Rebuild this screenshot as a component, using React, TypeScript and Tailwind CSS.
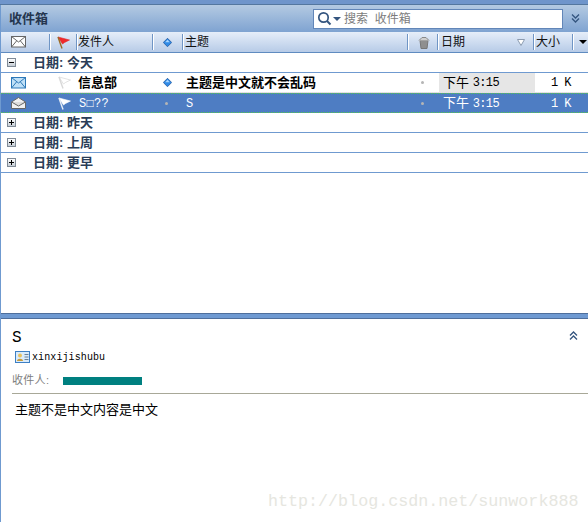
import React from 'react';

const cjk = '"Liberation Sans", "Noto Sans CJK SC", sans-serif';
const mono = '"Liberation Mono", monospace';

function Sep() {
  return <div className="w-[2px] h-[16px] shrink-0 border-l border-[#6f95c5] border-r border-r-white" />;
}

function Latin({ children }: { children: React.ReactNode }) {
  return <span className="text-[12px] tracking-[-0.6px]" style={{ fontFamily: mono }}>{children}</span>;
}

function Envelope({ open = false, fill = '#fff', stroke = '#555' }: { open?: boolean; fill?: string; stroke?: string }) {
  return (
    <svg width="15" height="12" viewBox="0 0 15 12" className="shrink-0">
      {open ? (
        <>
          <path d="M.5 5 7.5.5 14.5 5v6.5H.5z" fill={fill} stroke={stroke} />
          <path d="M.5 5 7.5 9 14.5 5" fill="#ddd" stroke={stroke} />
        </>
      ) : (
        <>
          <rect x=".5" y=".5" width="14" height="10.5" fill={fill} stroke={stroke} />
          <path d="M.5.5 7.5 6 14.5.5M.5 11 5.5 5M14.5 11 9.5 5" fill="none" stroke={stroke} />
        </>
      )}
    </svg>
  );
}

function Flag({ color, stroke, pole }: { color: string; stroke: string; pole: string }) {
  return (
    <svg width="13" height="13" viewBox="0 0 13 13" className="shrink-0">
      <path d="M1 1 12.5 4 7.5 6.5 5.5 8z" fill={color} stroke={stroke} strokeWidth=".6" />
      <path d="M1 1 5 12.5" fill="none" stroke={pole} strokeWidth="1.4" />
    </svg>
  );
}

function Diamond() {
  return (
    <svg width="9" height="9" viewBox="0 0 9 9" className="shrink-0">
      <path d="M4.5 .3 8.7 4.5 4.5 8.7 .3 4.5z" fill="#2f8ae6" stroke="#1b4f94" strokeWidth=".7" />
      <path d="M4.5 1.8 6.8 4.2H2.2z" fill="#a9d6ff" />
    </svg>
  );
}

function Dot() {
  return <div className="w-[3px] h-[3px] rounded-full bg-[#b5b5b5] shrink-0" />;
}

function Expander({ open = false }: { open?: boolean }) {
  return (
    <div className="relative w-[9px] h-[9px] border border-[#7f8a96] bg-gradient-to-b from-white to-[#c4ccd4] shrink-0">
      <div className="absolute left-[1px] top-[3px] w-[5px] h-px bg-black" />
      {!open && <div className="absolute left-[3px] top-[1px] w-px h-[5px] bg-black" />}
    </div>
  );
}

function Group({ label, open = false }: { label: string; open?: boolean }) {
  return (
    <div className="h-[20px] shrink-0 flex items-center border-b border-[#6f9ad0] bg-white">
      <div className="w-[32px] pl-[6px] flex items-center shrink-0">
        <Expander open={open} />
      </div>
      <span className="text-[13px] leading-[20px] font-bold text-[#2a3d57]">{label}</span>
    </div>
  );
}

function Chevrons({ up = false }: { up?: boolean }) {
  return (
    <svg width="9" height="9" viewBox="0 0 9 9" className="shrink-0">
      {up ? (
        <path d="M1 4.5 4.5 1 8 4.5M1 8.5 4.5 5 8 8.5" fill="none" stroke="#34557f" strokeWidth="1.3" />
      ) : (
        <path d="M1 .5 4.5 4 8 .5M1 4.5 4.5 8 8 4.5" fill="none" stroke="#34557f" strokeWidth="1.3" />
      )}
    </svg>
  );
}

export default function App() {
  return (
    <div className="w-[588px] h-[522px] flex flex-col overflow-hidden bg-white text-black" style={{ fontFamily: cjk }}>
      {/* top edge */}
      <div className="h-[5px] shrink-0 bg-[#6f95cb] border-b border-[#54779f]" />

      <div className="flex-1 flex flex-col border-l border-[#6f9ad0] min-h-0">
        {/* title bar with search */}
        <div className="h-[27px] shrink-0 flex items-center bg-gradient-to-b from-[#b4cae2] to-[#7fa3d1] pl-[8px] pr-[8px]">
          <span className="text-[13px] font-bold text-[#25364f]">收件箱</span>
          <div className="ml-auto w-[250px] h-[20px] flex items-center gap-[1px] bg-white border border-[#6286b8] pl-[3px]">
            <svg width="15" height="15" viewBox="0 0 15 15" className="shrink-0">
              <circle cx="6.5" cy="6.5" r="4.7" fill="none" stroke="#34557f" strokeWidth="1.7" />
              <path d="M10 10 13.5 13.5" stroke="#34557f" strokeWidth="2" />
            </svg>
            <div className="w-0 h-0 border-l-[4px] border-r-[4px] border-t-[4px] border-l-transparent border-r-transparent border-t-[#34557f]" />
            <span className="ml-[2px] text-[12px] text-[#7c7c7c] whitespace-pre">搜索  收件箱</span>
          </div>
          <div className="ml-[8px]">
            <Chevrons />
          </div>
        </div>

        {/* column headers */}
        <div className="h-[21px] shrink-0 flex items-center bg-gradient-to-b from-[#e6eef9] to-[#b7cbe7] border-b border-[#5f8bc0] text-[12px] leading-[22px] text-[#111]">
          <div className="w-[48px] pl-[10px] flex items-center shrink-0">
            <Envelope stroke="#666" />
          </div>
          <Sep />
          <div className="w-[25px] pl-[6px] flex items-center shrink-0">
            <Flag color="#f0282a" stroke="#e0282a" pole="#9a6a24" />
          </div>
          <Sep />
          <div className="w-[74px] shrink-0">发件人</div>
          <Sep />
          <div className="w-[28px] pl-[9px] flex items-center shrink-0">
            <Diamond />
          </div>
          <Sep />
          <div className="w-[223px] pl-[1px] shrink-0">主题</div>
          <Sep />
          <div className="w-[28px] pl-[9px] flex items-center shrink-0">
            <svg width="12" height="13" viewBox="0 0 12 13">
              <path d="M2 4.5h8L9 12.5H3z" fill="#8f8f8f" stroke="#777" />
              <path d="M1 4.5 4 1.5h4l3 3" fill="#cfcfcf" stroke="#888" />
            </svg>
          </div>
          <Sep />
          <div className="w-[94px] pl-[2px] pr-[8px] flex items-center justify-between shrink-0">
            <span>日期</span>
            <svg width="8" height="7" viewBox="0 0 8 7">
              <path d="M.5.5h7L4 6.5z" fill="#fff" stroke="#8b9bb0" />
            </svg>
          </div>
          <Sep />
          <div className="w-[37px] pl-[1px] shrink-0">大小</div>
          <Sep />
          <div className="pl-[5px]">
            <div className="w-0 h-0 border-l-[4px] border-r-[4px] border-t-[4px] border-l-transparent border-r-transparent border-t-black" />
          </div>
        </div>

        {/* message list */}
        <Group label="日期: 今天" open />
        <div className="h-[20px] flex items-center bg-white border-b border-[#e2e2e2] text-[13px] leading-[20px] shrink-0">
          <div className="w-[56px] pl-[10px] flex items-center shrink-0">
            <Envelope fill="#bfe0f7" stroke="#2d78b8" />
          </div>
          <div className="w-[21px] pl-px flex items-center shrink-0">
            <Flag color="#fff" stroke="#cfcfcf" pole="#d8d8d8" />
          </div>
          <div className="w-[85px] font-bold shrink-0">信息部</div>
          <div className="w-[23px] flex items-center shrink-0">
            <Diamond />
          </div>
          <div className="w-[235px] font-bold shrink-0">主题是中文就不会乱码</div>
          <div className="w-[18px] flex items-center shrink-0">
            <Dot />
          </div>
          <div className="w-[96px] h-full pl-[4px] flex items-center bg-[#e6e6e6] whitespace-pre shrink-0">
            下午 <Latin>3:15</Latin>
          </div>
          <div className="flex-1 pl-[16px] whitespace-pre">
            <Latin>1 K</Latin>
          </div>
        </div>
        <div className="h-[20px] flex items-center bg-[#4e7dc3] border-t border-b border-dotted border-[#55c84f] text-[13px] leading-[18px] text-white shrink-0">
          <div className="w-[56px] pl-[10px] flex items-center shrink-0">
            <Envelope open fill="#f1f1f1" stroke="#666" />
          </div>
          <div className="w-[21px] pl-px flex items-center shrink-0">
            <Flag color="#fff" stroke="#fff" pole="#e8eef6" />
          </div>
          <div className="w-[85px] pl-px shrink-0">
            <span className="text-[12px] tracking-[0.3px]" style={{ fontFamily: mono }}>S□??</span>
          </div>
          <div className="w-[23px] pl-[2px] flex items-center shrink-0">
            <Dot />
          </div>
          <div className="w-[235px] shrink-0">
            <Latin>S</Latin>
          </div>
          <div className="w-[18px] flex items-center shrink-0">
            <Dot />
          </div>
          <div className="w-[96px] pl-[4px] whitespace-pre shrink-0">
            下午 <Latin>3:15</Latin>
          </div>
          <div className="flex-1 pl-[16px] whitespace-pre">
            <Latin>1 K</Latin>
          </div>
        </div>
        <Group label="日期: 昨天" />
        <Group label="日期: 上周" />
        <Group label="日期: 更早" />
        <div className="flex-1" />

        {/* splitter */}
        <div className="h-[6px] shrink-0 bg-[#6f9ad2] border-t border-b border-[#4f6f9c]" />

        {/* reading pane */}
        <div className="h-[203px] shrink-0 relative bg-white">
          <div className="flex items-start justify-between pl-[11px] pr-[10px] pt-[10px] h-[31px]">
            <span className="text-[16px] leading-[18px]" style={{ fontFamily: mono }}>S</span>
            <div className="mt-[2px]">
              <Chevrons up />
            </div>
          </div>
          <div className="flex items-center h-[14px] pl-[14px] gap-[1px]">
            <svg width="16" height="13" viewBox="0 0 16 13" className="shrink-0">
              <rect x=".5" y=".5" width="14" height="11" fill="#d9ebfb" stroke="#3d7fc4" />
              <circle cx="5" cy="4.5" r="2" fill="#e8c15e" />
              <path d="M2 10c0-3 6-3 6 0z" fill="#c79a3a" />
              <path d="M9.5 3.5h4M9.5 6h4M9.5 8.5h4" stroke="#6b7f96" />
            </svg>
            <span className="text-[10px] tracking-[0.1px]" style={{ fontFamily: mono }}>xinxijishubu</span>
          </div>
          <div className="flex items-center h-[20px] mt-[6px] pl-[11px]">
            <span className="text-[11px] tracking-[0.3px] text-[#808080] w-[51px] shrink-0">收件人:</span>
            <div className="w-[79px] h-[8px] mt-[1px] bg-[#008080]" />
          </div>
          <div className="h-px bg-[#a8a898] mt-[3px] ml-[11px]" />
          <div className="pl-[14px] pt-[8px] text-[13px] leading-[16px]">主题不是中文内容是中文</div>
          <span
            className="absolute left-[267px] top-[172px] text-[16.7px] leading-[22px] text-[#e6e6e0] whitespace-nowrap"
            style={{ fontFamily: mono }}
          >
            http://blog.csdn.net/sunwork888
          </span>
        </div>
      </div>
    </div>
  );
}
